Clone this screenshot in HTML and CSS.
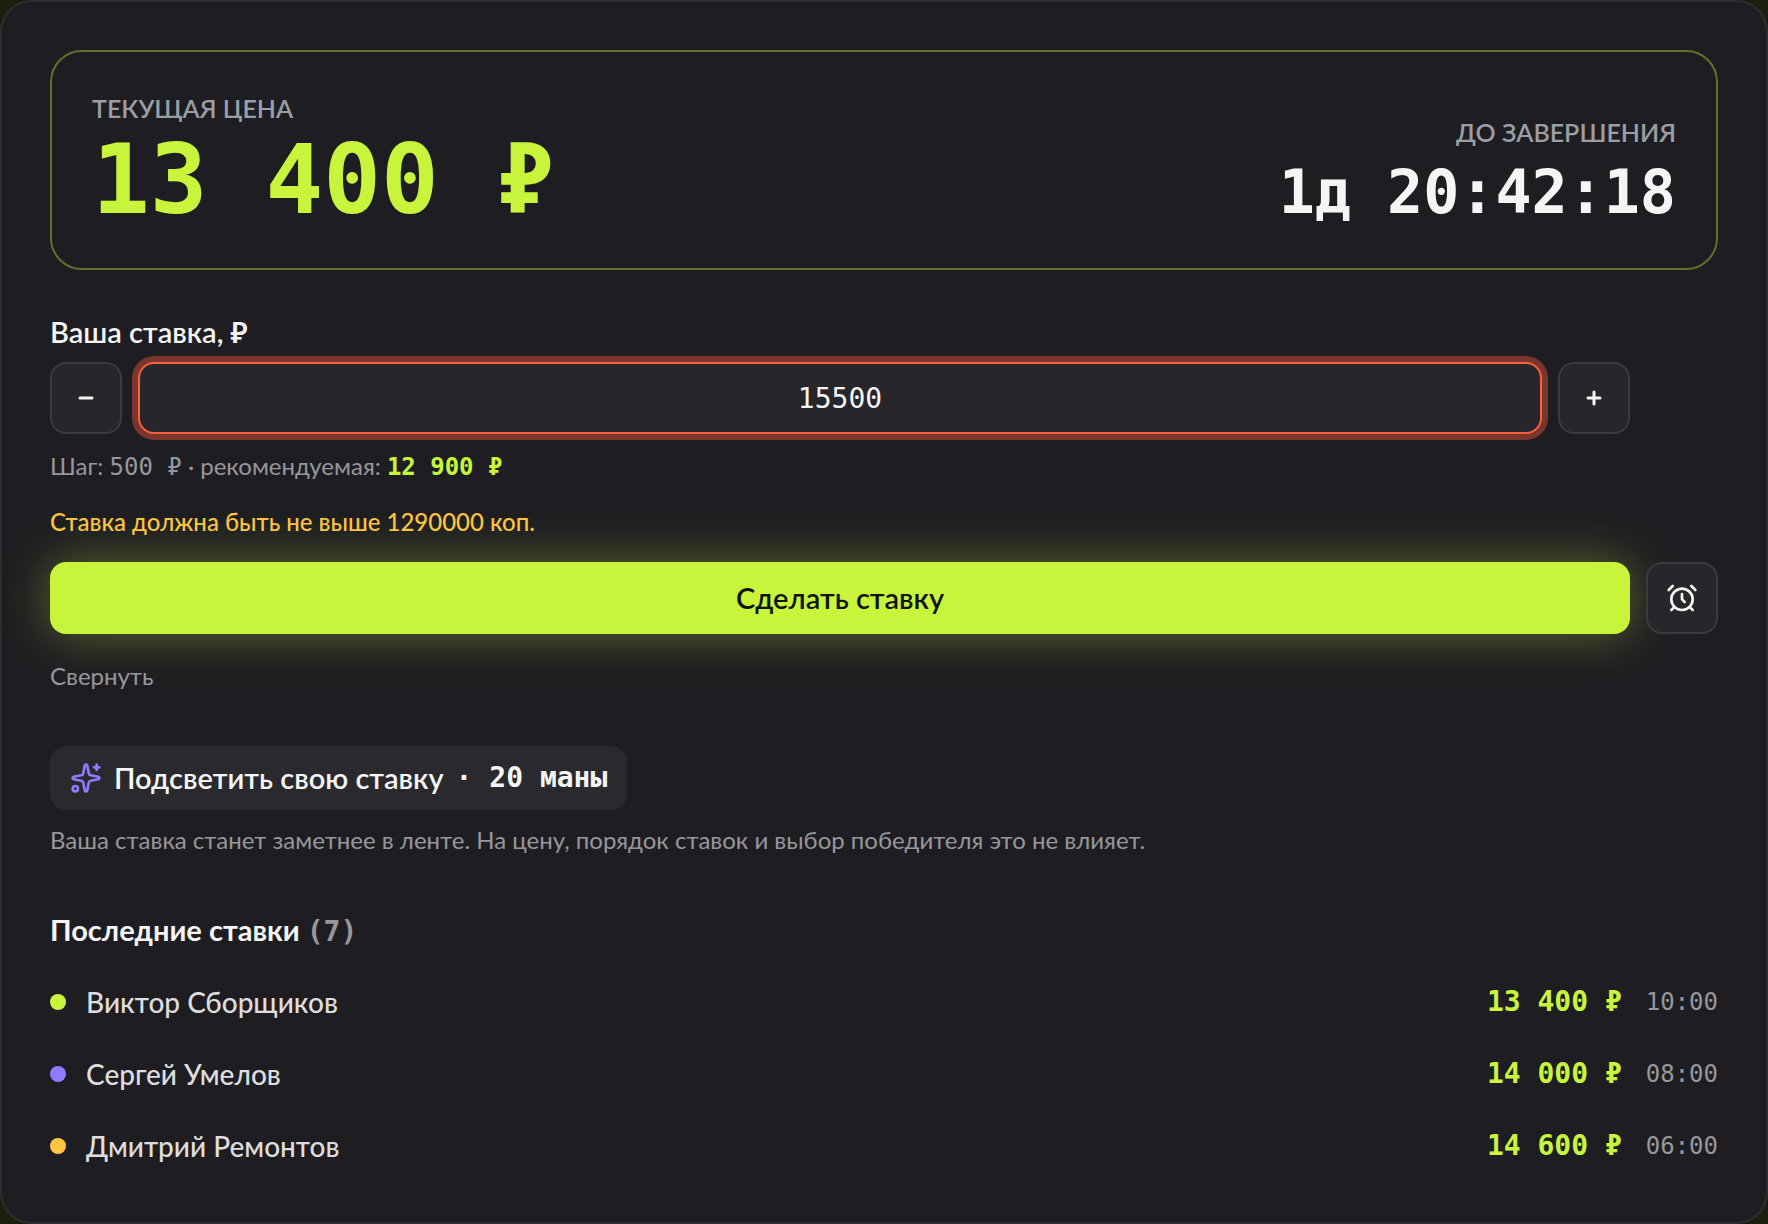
FILE: index.html
```html
<!DOCTYPE html>
<html lang="ru">
<head>
    <meta charset="UTF-8">
    <meta name="viewport" content="width=device-width, initial-scale=1.0">
    <title>Сделать ставку</title>
    <link rel="stylesheet" href="styles.css">
</head>
<body>
    <main class="bid-card">
        <section class="summary">
            <div class="summary-price">
                <div class="caption">ТЕКУЩАЯ ЦЕНА</div>
                <div class="price">13 400 ₽</div>
            </div>
            <div class="summary-timer">
                <div class="caption">ДО ЗАВЕРШЕНИЯ</div>
                <div class="timer">1д 20:42:18</div>
            </div>
        </section>

        <form class="bid-form">
            <div class="bid-field">
                <label for="bid">Ваша ставка, ₽</label>
                <div class="stepper">
                    <button type="button" class="icon-button" aria-label="Уменьшить">
                        <svg viewBox="0 0 32 32"><path d="M10 16h12"/></svg>
                    </button>
                    <input type="text" id="bid" name="bid" value="15500" inputmode="numeric">
                    <button type="button" class="icon-button" aria-label="Увеличить">
                        <svg viewBox="0 0 32 32"><path d="M10 16h12M16 10v12"/></svg>
                    </button>
                </div>
                <p class="hint">Шаг: <span class="mono">500 ₽</span> · рекомендуемая: <span class="mono recommended">12 900 ₽</span></p>
                <p class="error">Ставка должна быть не выше 1290000 коп.</p>
            </div>
            <div class="actions">
                <button type="submit" class="submit-button">Сделать ставку</button>
                <button type="button" class="icon-button" aria-label="Напомнить">
                    <svg viewBox="0 0 24 24">
                        <circle cx="12" cy="13" r="8"/>
                        <path d="M12 9v4l2 2M5 3 2 6M22 6l-3-3M6.38 18.7 4 21M17.64 18.67 20 21"/>
                    </svg>
                </button>
            </div>
            <button type="button" class="collapse-button">Свернуть</button>
        </form>

        <section class="highlight">
            <button type="button" class="highlight-button">
                <svg viewBox="0 0 24 24">
                    <path d="M11.017 2.814a1 1 0 0 1 1.966 0l1.051 5.558a2 2 0 0 0 1.594 1.594l5.558 1.051a1 1 0 0 1 0 1.966l-5.558 1.051a2 2 0 0 0-1.594 1.594l-1.051 5.558a1 1 0 0 1-1.966 0l-1.051-5.558a2 2 0 0 0-1.594-1.594l-5.558-1.051a1 1 0 0 1 0-1.966l5.558-1.051a2 2 0 0 0 1.594-1.594z"/>
                    <path d="M20 2v4M22 4h-4"/>
                    <circle cx="4" cy="20" r="2"/>
                </svg>
                <span>Подсветить свою ставку</span>
                <span class="mono mana">· 20 маны</span>
            </button>
            <p class="hint">Ваша ставка станет заметнее в ленте. На цену, порядок ставок и выбор победителя это не влияет.</p>
        </section>

        <section class="history">
            <h2>Последние ставки <span class="mono count">(7)</span></h2>
            <ul class="bids">
                <li>
                    <span class="dot dot-lime"></span>
                    <span class="bidder">Виктор Сборщиков</span>
                    <span class="bid-price">13 400 ₽</span>
                    <time>10:00</time>
                </li>
                <li>
                    <span class="dot dot-violet"></span>
                    <span class="bidder">Сергей Умелов</span>
                    <span class="bid-price">14 000 ₽</span>
                    <time>08:00</time>
                </li>
                <li>
                    <span class="dot dot-amber"></span>
                    <span class="bidder">Дмитрий Ремонтов</span>
                    <span class="bid-price">14 600 ₽</span>
                    <time>06:00</time>
                </li>
            </ul>
        </section>
    </main>
</body>
</html>
```
FILE: styles.css
```css
* {
    box-sizing: border-box;
}

body {
    margin: 0;
    background-color: #1b200c;
    color: #f5f5f6;
    font-family: Lato, "Noto Sans", sans-serif;
    font-size: 28px;
    line-height: 36px;
}

p, h2, ul {
    margin: 0;
    padding: 0;
}

button, input {
    font: inherit;
    color: inherit;
}

button {
    padding: 0;
    border: none;
    cursor: pointer;
}

svg {
    display: block;
    flex: none;
    width: 32px;
    height: 32px;
    fill: none;
    stroke: currentColor;
    stroke-width: 2;
    stroke-linecap: round;
    stroke-linejoin: round;
}

.mono, .price, .timer, .bid-price, time, .stepper input {
    font-family: "DejaVu Sans Mono", monospace;
}

/* keeps inline numbers from stretching the line */
.mono {
    line-height: 1;
}

.bid-card {
    padding: 48px;
    background-color: #1e1e22;
    border: 2px solid #2e2e33;
    border-radius: 32px;
}

/* Current price and countdown */
.summary {
    display: flex;
    justify-content: space-between;
    align-items: flex-end;
    padding: 40px;
    border: 2px solid #646f2c;
    border-radius: 32px;
}

.caption {
    margin-bottom: 8px;
    color: #9b9ea4;
    font-size: 25px;
    font-weight: 600;
    line-height: 32px;
}

.price {
    color: #c8f53c;
    font-size: 96px;
    font-weight: 700;
    line-height: 96px;
}

.summary-timer {
    text-align: right;
}

.timer {
    font-size: 60px;
    font-weight: 700;
    line-height: 72px;
}

/* Bid form */
.bid-form {
    margin-top: 44px;
}

.bid-field {
    margin-right: 88px;
}

.bid-field label {
    display: block;
    margin-bottom: 12px;
    font-size: 29px;
    font-weight: 600;
}

.stepper, .actions {
    display: flex;
    gap: 16px;
}

.icon-button {
    display: flex;
    flex: none;
    justify-content: center;
    align-items: center;
    width: 72px;
    height: 72px;
    background-color: #26262b;
    border: 2px solid #3a3a3f;
    border-radius: 16px;
}

.stepper .icon-button svg {
    stroke-width: 3;
}

.stepper input {
    flex: 1;
    min-width: 0;
    height: 72px;
    background-color: #26262b;
    border: 2px solid #f9603f;
    border-radius: 16px;
    outline: none;
    box-shadow: 0 0 0 6px #7a352c;
    text-align: center;
}

.hint, .error, .collapse-button {
    color: #97979c;
    font-size: 24px;
    line-height: 32px;
}

.bid-field .hint {
    margin-top: 16px;
}

.recommended {
    color: #c8f53c;
    font-weight: 700;
}

.error {
    margin: 24px 0;
    color: #ffc440;
    font-weight: 500;
}

.submit-button {
    flex: 1;
    height: 72px;
    background-color: #c8f53c;
    border-radius: 16px;
    box-shadow: 0 0 48px rgba(200, 245, 60, 0.35);
    color: #0f1404;
    font-size: 29px;
    font-weight: 600;
}

.collapse-button {
    display: block;
    margin-top: 26px;
    background: none;
}

/* Paid highlight */
.highlight {
    margin-top: 54px;
}

.highlight-button {
    display: flex;
    align-items: center;
    gap: 12px;
    height: 64px;
    padding: 0 20px;
    background-color: #2a2a2e;
    border-radius: 16px;
    font-size: 29px;
    font-weight: 600;
}

.mana {
    font-size: 28px;
}

.highlight-button svg {
    color: #8f7bff;
}

.highlight .hint {
    margin-top: 14px;
}

/* Latest bids */
.history {
    margin-top: 54px;
}

.history h2 {
    font-size: 29px;
    font-weight: 700;
    line-height: 40px;
}

.count {
    color: #97979c;
    font-size: 28px;
}

.bids {
    display: flex;
    flex-direction: column;
    gap: 16px;
    margin-top: 24px;
    list-style: none;
}

.bids li {
    display: flex;
    align-items: center;
    height: 56px;
}

.dot {
    width: 16px;
    height: 16px;
    margin-right: 20px;
    border-radius: 50%;
}

.dot-lime {
    background-color: #c8f53c;
}

.dot-violet {
    background-color: #8f7bff;
}

.dot-amber {
    background-color: #ffc440;
}

.bidder {
    flex: 1;
    color: #dededf;
    font-weight: 500;
}

.bid-price {
    color: #c8f53c;
    font-weight: 700;
}

.bids time {
    margin-left: 24px;
    color: #97979c;
    font-size: 24px;
}
```
